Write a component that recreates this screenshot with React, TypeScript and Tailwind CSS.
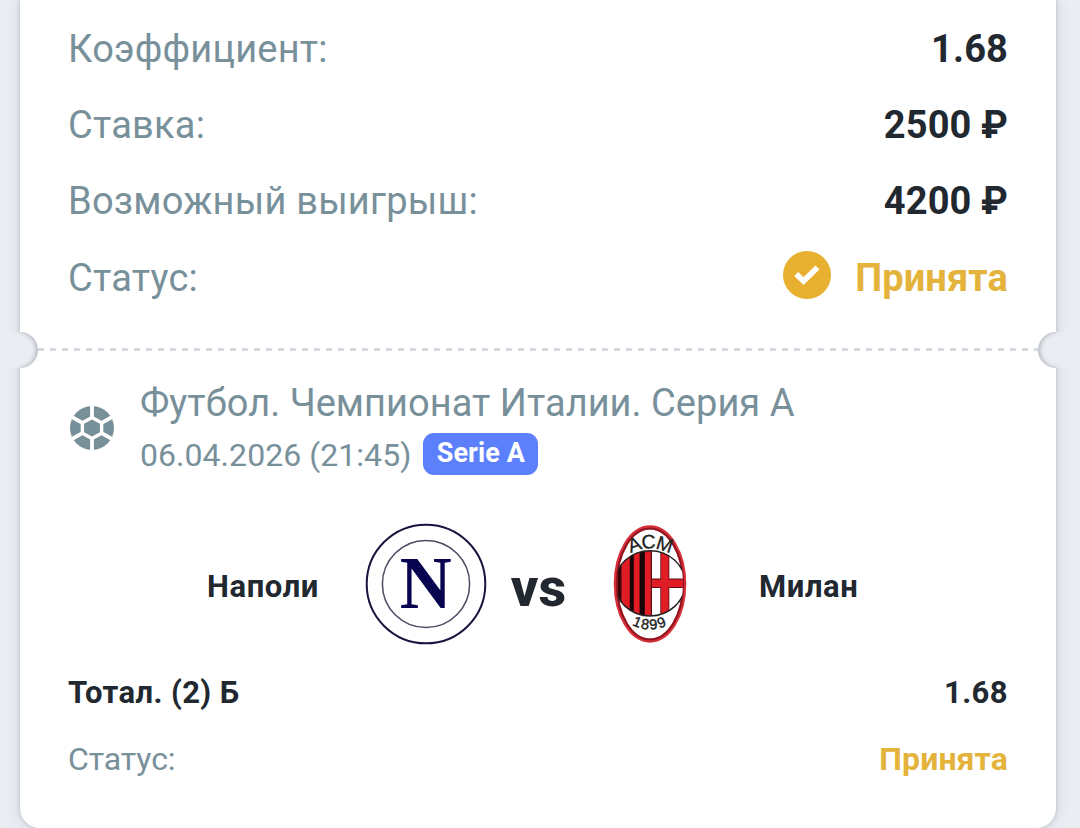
import type { ReactNode } from "react";

function Row({ label, children }: { label: string; children: ReactNode }) {
  return (
    <div className="flex h-[76.3px] items-center justify-between text-[38px] leading-[76px]">
      <span className="tracking-[0.22px] text-[#78909a]">{label}</span>
      <span className="flex items-center font-bold tracking-[0.12px] text-[#212830]">{children}</span>
    </div>
  );
}

function CheckBadge() {
  return (
    <svg className="mr-6 -mt-[5px] h-12 w-12" viewBox="0 0 48 48">
      <circle cx="24" cy="24" r="24" fill="#e7b02e" />
      <path d="M13.2 23 L20.5 30 L34.5 16.5" fill="none" stroke="#fff" strokeWidth="5.6" />
    </svg>
  );
}

function BallIcon() {
  return (
    <svg className="h-11 w-11" viewBox="-22 -22 44 44">
      <circle r="22" fill="#78909a" />
      <path d="M0 -10.5 L9.6 -5.2 V5.2 L0 10.5 L-9.6 5.2 V-5.2 Z" fill="#78909a" stroke="#fff" strokeWidth="3.4" />
      <path
        d="M0 -10 V-23 M0 10 V23 M9.6 -5.2 L22 -12 M9.6 5.2 L22 12 M-9.6 -5.2 L-22 -12 M-9.6 5.2 L-22 12"
        stroke="#fff"
        strokeWidth="3.8"
      />
    </svg>
  );
}

function NapoliLogo() {
  return (
    <svg className="h-[122px] w-[122px]" viewBox="0 0 122 122">
      <circle cx="61" cy="61" r="59.3" fill="#fff" stroke="#17153f" strokeWidth="2" />
      <circle cx="61" cy="61" r="43.6" fill="none" stroke="#4b4b62" strokeWidth="1.5" />
      <text
        className="font-['Liberation_Serif',serif] font-bold"
        x="60.7"
        y="84.5"
        fontSize="74"
        fill="#08044f"
        textAnchor="middle"
        textLength="52"
        lengthAdjust="spacingAndGlyphs"
      >
        N
      </text>
    </svg>
  );
}

function MilanLogo() {
  return (
    <svg className="h-[120px] w-[74px]" viewBox="0 0 74 120">
      <defs>
        <clipPath id="milanOval">
          <ellipse cx="37" cy="60" rx="33" ry="56" />
        </clipPath>
        <clipPath id="milanShield">
          <ellipse cx="37" cy="59.3" rx="35" ry="32.6" />
        </clipPath>
        <path id="arcTop" d="M6 37 Q37 12 68 37" />
        <path id="arcBottom" d="M10 95 Q37 116 64 95" />
      </defs>
      <ellipse cx="37" cy="60" rx="34.2" ry="56.6" fill="#fff" stroke="#d8303a" strokeWidth="4.2" />
      <ellipse cx="37" cy="60" rx="33.2" ry="55.4" fill="none" stroke="#8f1620" strokeWidth="2" />
      <g clipPath="url(#milanOval)">
        <g clipPath="url(#milanShield)">
          <rect x="3" y="26" width="35" height="68" fill="#e01c24" />
          <path d="M6.5 26 V94" stroke="#3a0509" strokeWidth="4" />
          <path d="M18.8 26 V94" stroke="#170508" strokeWidth="4" />
          <path d="M29.2 26 V94" stroke="#170508" strokeWidth="5.2" />
          <rect x="38.5" y="26" width="34" height="68" fill="#fff" />
          <path d="M38.4 26 V94" stroke="#5c0c12" strokeWidth="1.2" />
          <path d="M51.8 26 V94" stroke="#5c0c12" strokeWidth="9" />
          <path d="M39 59.3 H72" stroke="#5c0c12" strokeWidth="9.4" />
          <path d="M51.8 26 V94" stroke="#e01c24" strokeWidth="7.4" />
          <path d="M39 59.3 H72" stroke="#e01c24" strokeWidth="7.6" />
        </g>
        <ellipse cx="37" cy="59.3" rx="35" ry="32.6" fill="none" stroke="#222" strokeWidth="1.5" />
      </g>
      <text
        className="font-['Liberation_Sans',sans-serif] font-normal"
        fontSize="19.5"
        fill="#222"
        stroke="#222"
        strokeWidth="0.3"
        textAnchor="middle"
        letterSpacing="-1"
      >
        <textPath href="#arcTop" startOffset="50%">
          ACM
        </textPath>
      </text>
      <text
        className="font-['Liberation_Sans',sans-serif] font-normal"
        fontSize="14.5"
        fill="#222"
        stroke="#222"
        strokeWidth="0.4"
        textAnchor="middle"
        letterSpacing="1.4"
      >
        <textPath href="#arcBottom" startOffset="50%">
          1899
        </textPath>
      </text>
    </svg>
  );
}

export default function App() {
  return (
    <div className="h-[828px] overflow-hidden bg-[#eaedf2] pr-6 pl-5 font-['Roboto',sans-serif]">
      <div className="relative h-[828px] rounded-b-[20px] bg-white pt-[10.6px] shadow-[0_0_4px_rgba(80,88,110,0.3),0_0_16px_rgba(80,88,110,0.14)]">
        <div className="px-12">
          <Row label="Коэффициент:">1.68</Row>
          <Row label="Ставка:">2500 ₽</Row>
          <Row label="Возможный выигрыш:">4200 ₽</Row>
          <Row label="Статус:">
            <CheckBadge />
            <span className="text-[#e4b33c]">Принята</span>
          </Row>
        </div>

        <div className="mt-[16.2px] flex h-9 items-center px-[18px]">
          <div className="h-[3px] flex-1 bg-[repeating-linear-gradient(90deg,#d5dae0_0px,#d5dae0_6px,transparent_6px,transparent_12px)]" />
        </div>
        <div className="absolute top-[332px] -left-[18px] h-9 w-9 rounded-full bg-[#eaedf2] shadow-[inset_-2px_0_4px_rgba(60,65,80,0.3)]" />
        <div className="absolute top-[332px] -right-[18px] h-9 w-9 rounded-full bg-[#eaedf2] shadow-[inset_2px_0_4px_rgba(60,65,80,0.3)]" />
        <div className="absolute top-[332px] -left-5 h-9 w-5 bg-linear-to-r from-[#eaedf2] from-70% to-[#eaedf2]/50" />
        <div className="absolute top-[332px] -right-6 h-9 w-6 bg-linear-to-l from-[#eaedf2] from-70% to-[#eaedf2]/50" />

        <div className="px-12">
          <div className="flex h-[110px] items-start pt-[9px]">
            <div className="w-[72px] pt-[29px] pl-[2px]">
              <BallIcon />
            </div>
            <div className="text-[#78909a]">
              <div className="h-[52px] text-[38px] leading-[53px] tracking-[0.03px]">Футбол. Чемпионат Италии. Серия А</div>
              <div className="flex h-[53px] items-center text-[32px] tracking-[0.05px]">
                06.04.2026 (21:45)
                <span className="-mt-[2px] ml-3 flex h-[42px] w-[115px] items-center justify-center rounded-[11px] bg-[#5c7ffb] pb-[2px] text-[27px] font-bold tracking-[0.1px] text-white">
                  Serie A
                </span>
              </div>
            </div>
          </div>

          <div className="mt-[45.5px] flex h-[122px] items-center text-[31px] font-bold text-[#212830]">
            <div className="w-[251px] pt-[5px] text-right tracking-[0.6px]">Наполи</div>
            <div className="ml-[46px] w-[122px]">
              <NapoliLogo />
            </div>
            <div className="w-[103px] pt-2 text-center text-[54px] leading-[54px] font-extrabold">vs</div>
            <div className="ml-[23px] w-[74px]">
              <MilanLogo />
            </div>
            <div className="ml-[72px] pt-[5px] tracking-[0.6px]">Милан</div>
          </div>

          <div className="mt-[14px] flex h-[67px] items-center justify-between text-[31px] font-bold tracking-[0.4px] text-[#212830]">
            <span>Тотал. (2) Б</span>
            <span>1.68</span>
          </div>
          <div className="flex h-[65px] items-center justify-between text-[32px]">
            <span className="tracking-[-0.1px] text-[#78909a]">Статус:</span>
            <span className="font-bold tracking-[0.1px] text-[#e4b33c]">Принята</span>
          </div>
        </div>
      </div>
    </div>
  );
}
